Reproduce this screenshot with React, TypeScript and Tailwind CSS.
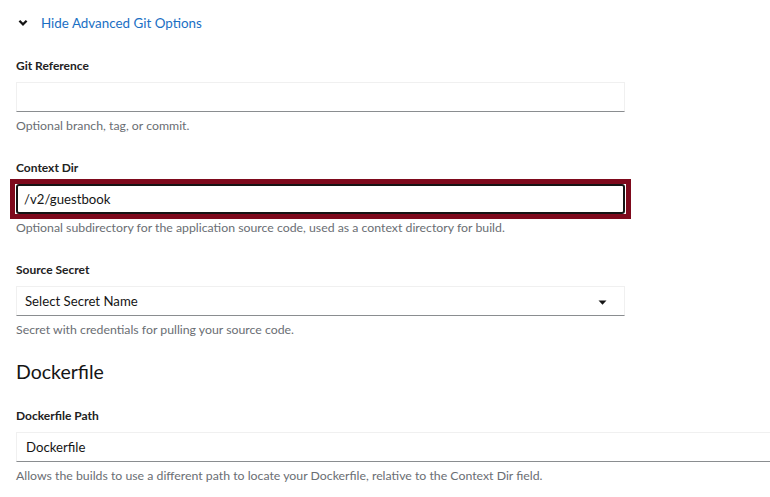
import React from "react";

const font = { fontFamily: "Lato, 'Liberation Sans', sans-serif" };

function Caret() {
  return (
    <svg width="9" height="5" viewBox="0 0 9 5" className="shrink-0">
      <path d="M0.5 0.5 L8.5 0.5 L4.5 4.8 Z" fill="#151515" />
    </svg>
  );
}

function Chevron() {
  return (
    <svg width="10" height="8" viewBox="0 0 10 8">
      <path d="M1.4 1.8 L5 5.3 L8.6 1.8" fill="none" stroke="#151515" strokeWidth="2.3" />
    </svg>
  );
}

export default function App() {
  return (
    <div className="w-[770px] h-[497px] overflow-hidden bg-white text-[#151515]" style={font}>
      <div className="pl-4 pt-[13px]">
        <div className="flex items-center h-5 pl-[2px]">
          <Chevron />
          <span className="ml-[13px] text-[13.4px] leading-5 text-[#1a6fc4]">Hide Advanced Git Options</span>
        </div>

        <div className="mt-[23px] flex flex-col gap-6">
          <div className="w-[609px]">
            <div className="text-[12px] font-bold leading-[20px] mb-[6px] text-[#222]">Git Reference</div>
            <div className="h-[30px] border border-[#f0f0f0] border-b-[#8a8d90]" />
            <div className="mt-[6px] text-[12.3px] leading-4 text-[#6a6e73]">Optional branch, tag, or commit.</div>
          </div>

          <div className="w-[609px]">
            <div className="text-[12px] font-bold leading-[20px] mb-[6px] text-[#222]">Context Dir</div>
            <div className="-mx-[6px] -my-[5px] border-[5px] border-[#7e0a1d]">
              <div className="ml-px mr-px h-[30px] rounded-[3px] border-2 border-[#151515] flex items-center pt-[2px] pl-[6px] text-[13.2px] text-[#151515]">
                /v2/guestbook
              </div>
            </div>
            <div className="mt-[6px] text-[12.3px] leading-4 text-[#6a6e73]">
              Optional subdirectory for the application source code, used as a context directory for build.
            </div>
          </div>

          <div className="w-[609px]">
            <div className="text-[12px] font-bold leading-[20px] mb-[6px] text-[#222]">Source Secret</div>
            <div className="h-[30px] border border-[#f0f0f0] border-b-[#8a8d90] flex items-center justify-between pt-[2px] pl-2 pr-[17px] text-[13.2px]">
              <span>Select Secret Name</span>
              <Caret />
            </div>
            <div className="mt-[6px] text-[12.3px] leading-4 text-[#6a6e73]">Secret with credentials for pulling your source code.</div>
          </div>
        </div>

        <div className="mt-[22px] text-[19.5px] leading-6">Dockerfile</div>

        <div className="mt-[22px]">
          <div className="text-[12px] font-bold leading-[20px] mb-[6px] text-[#222]">Dockerfile Path</div>
          <div className="w-[800px] h-[30px] border border-[#f0f0f0] border-b-[#8a8d90] flex items-center pt-[2px] pl-[9px] text-[13.2px]">
            Dockerfile
          </div>
          <div className="mt-[6px] text-[12.3px] leading-4 text-[#6a6e73]">
            Allows the builds to use a different path to locate your Dockerfile, relative to the Context Dir field.
          </div>
        </div>
      </div>
    </div>
  );
}
